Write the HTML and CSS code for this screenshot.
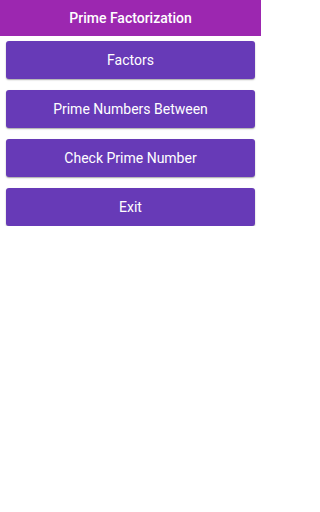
FILE: index.html
```html
<!DOCTYPE html>
<html>
<head>
<meta charset="utf-8">
<meta name="viewport" content="width=261">
<link rel="stylesheet" href="styles.css">
</head>
<body>
<div class="screen">
<header class="bar">Prime Factorization</header>
<main class="menu">
  <button class="btn">Factors</button>
  <button class="btn">Prime Numbers Between</button>
  <button class="btn">Check Prime Number</button>
  <button class="btn">Exit</button>
</main>
</div>
</body>
</html>
```
FILE: styles.css
```css
html, body {
  margin: 0;
  padding: 0;
  background: #ffffff;
  font-family: Roboto, "Liberation Sans", sans-serif;
}
.screen {
  width: 261px;
}
.bar {
  height: 36px;
  background: #9c27b0;
  color: #ffffff;
  font-size: 14px;
  font-weight: 500;
  display: flex;
  align-items: center;
  justify-content: center;
}
.menu {
  display: flex;
  flex-direction: column;
  gap: 11px;
  padding: 5px 6px 0 6px;
}
.btn {
  height: 38px;
  border: none;
  border-radius: 3px;
  background: #673ab7;
  color: #ffffff;
  font-family: Roboto, "Liberation Sans", sans-serif;
  font-size: 14px;
  box-shadow: 0 1px 1.5px rgba(0,0,0,0.35);
  padding: 0;
}
```
